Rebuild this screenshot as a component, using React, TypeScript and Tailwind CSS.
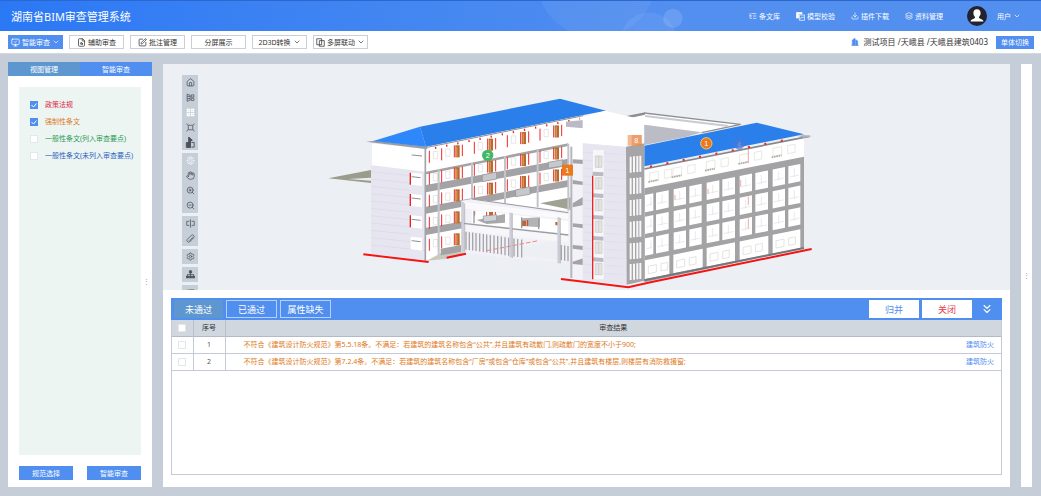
import type { ReactNode } from "react";
import {
  ChevronDown,
  ChevronsDown,
  Download,
  FileSearch,
  Hand,
  House,
  Layers,
  ListTree,
  MonitorCheck,
  Ruler,
  Settings,
  SquarePen,
  ZoomIn,
  ZoomOut,
} from "lucide-react";

interface GlyphProps {
  children: ReactNode;
  size?: number;
}

function Glyph({ children, size = 9 }: GlyphProps) {
  return (
    <svg
      width={size}
      height={size}
      viewBox="0 0 24 24"
      fill="none"
      stroke="currentColor"
      strokeWidth="2"
      className="shrink-0"
    >
      {children}
    </svg>
  );
}

const modelCheckIcon = (
  <Glyph>
    <path d="M1 1h15v4H7v11H1z" fill="currentColor" />
    <path d="M9 8h14v14H9z" />
    <path d="M12 18l3-5 3 3 3-4" />
  </Glyph>
);

const multiScreenIcon = (
  <Glyph>
    <path d="M15 7V2H2v16h6M9 7h13v15H9zM15 7v11H9" />
  </Glyph>
);

const buildingIcon = (
  <Glyph size={8}>
    <path d="M4 22V6l8-5v21zM14 22V5l6 4v13z" fill="currentColor" />
    <path d="M1 22h22" />
  </Glyph>
);

const componentIcon = (
  <Glyph>
    <path d="M3 3l8 3v13l-8 3zM3 9h8M3 15h8M14 5h7v6h-7zM14 14h7v6h-7z" />
  </Glyph>
);

const gridIcon = (
  <Glyph>
    <path d="M2 2h9v9H2zM13 2h9v9h-9zM2 13h9v9H2zM13 13h9v9h-9z" fill="currentColor" stroke="none" />
    <path d="M5 7h4M15 7h4M5 17h4M15 17h4" stroke="#c6ced8" />
  </Glyph>
);

const fitIcon = (
  <Glyph>
    <path d="M6 6h12v12H6zM6 6L1 2M18 6l5-4M6 18l-5 4M18 18l5 4" />
  </Glyph>
);

const walkIcon = (
  <Glyph size={11}>
    <path d="M8 0l8 7-4 2v5l-4-1zM3 12h9v11H3z" fill="currentColor" />
    <path d="M14 12h6v10h-6" />
  </Glyph>
);

const rotateIcon = (
  <Glyph>
    <path d="M8 8l4-2 4 2v7l-4 3-4-3zM3 8a10 10 0 0 1 18 0M3 16a10 10 0 0 0 18 0M1 12h4M19 12h4" />
  </Glyph>
);

const sectionIcon = (
  <Glyph>
    <path d="M9 6H2v11h7M15 6h7v11h-7M12 1v22" />
  </Glyph>
);

const treeIcon = (
  <Glyph>
    <path d="M12 7v9M4 16v-4h16v4" />
    <path d="M9 2h6v6H9zM1 16h6v5H1zM9 16h6v5H9zM17 16h6v5h-6z" fill="currentColor" />
  </Glyph>
);

const navItems = [
  { label: "条文库", icon: <ListTree size={8} /> },
  { label: "模型校验", icon: modelCheckIcon },
  { label: "插件下载", icon: <Download size={8} /> },
  { label: "资料管理", icon: <Layers size={8} /> },
];

const actions: { label: string; icon?: ReactNode; menu?: boolean; active?: boolean }[] = [
  { label: "智能审查", icon: <MonitorCheck size={9} />, menu: true, active: true },
  { label: "辅助审查", icon: <FileSearch size={9} /> },
  { label: "批注管理", icon: <SquarePen size={9} /> },
  { label: "分屏展示" },
  { label: "2D3D转换", menu: true },
  { label: "多屏联动", icon: multiScreenIcon, menu: true },
];

const filters = [
  { id: "policy", label: "政策法规", checked: true, color: "text-[#dc2440]" },
  { id: "mandatory", label: "强制性条文", checked: true, color: "text-[#dd7a1c]" },
  { id: "general-listed", label: "一般性条文(列入审查要点)", checked: false, color: "text-[#2a9a55]" },
  { id: "general-other", label: "一般性条文(未列入审查要点)", checked: false, color: "text-[#2a62bd]" },
];

const toolGroups: { name: string; icon: ReactNode; light?: boolean }[][] = [
  [
    { name: "主页", icon: <House size={9} /> },
    { name: "构件", icon: componentIcon },
    { name: "网格", icon: gridIcon, light: true },
    { name: "适配", icon: fitIcon },
    { name: "漫游", icon: walkIcon },
  ],
  [
    { name: "旋转", icon: rotateIcon, light: true },
    { name: "平移", icon: <Hand size={9} /> },
    { name: "放大", icon: <ZoomIn size={9} /> },
    { name: "缩小", icon: <ZoomOut size={9} /> },
  ],
  [
    { name: "剖切", icon: sectionIcon },
    { name: "测量", icon: <Ruler size={9} className="rotate-90" /> },
  ],
  [{ name: "设置", icon: <Settings size={9} /> }],
  [{ name: "结构树", icon: treeIcon }],
  [{ name: "列表", icon: <ListTree size={9} /> }],
];

const results = [
  {
    text: "不符合《建筑设计防火规范》第5.5.18条。不满足：若建筑的建筑名称包含“公共”,并且建筑有疏散门,则疏散门的宽度不小于900;",
    type: "建筑防火",
  },
  {
    text: "不符合《建筑设计防火规范》第7.2.4条。不满足：若建筑的建筑名称包含“厂房”或包含“仓库”或包含“公共”,并且建筑有楼层,则楼层有消防救援窗;",
    type: "建筑防火",
  },
];

function Header() {
  return (
    <header className="relative flex h-[31px] shrink-0 items-center justify-between overflow-hidden border-t border-[#2a68cf] bg-linear-to-r from-[#2b78f5] to-[#528fef] to-65% pr-[20px] pl-[11px] text-white">
      <svg className="absolute top-0 left-[530px] h-full w-[160px]" viewBox="0 0 160 31" fill="#fff">
        <circle cx="66" cy="-24" r="62" opacity=".06" />
        <circle cx="120" cy="41" r="29" opacity=".07" />
        <circle cx="145" cy="18" r="10" opacity=".13" />
      </svg>
      <h1 className="text-[11px] leading-none">湖南省BIM审查管理系统</h1>
      <nav className="relative flex items-center">
        <div className="flex items-center gap-[16px]">
          {navItems.map((item) => (
            <a key={item.label} href="#" className="flex items-center gap-[2px]">
              {item.icon}
              {item.label}
            </a>
          ))}
        </div>
        <svg viewBox="0 0 20 20" className="ml-[24px] size-[20px]">
          <circle cx="10" cy="10" r="10" fill="#23222e" />
          <path
            d="M10 3.2c2.4 0 3.6 1.6 3.6 3.8 0 1.7-.7 3.2-1.7 4 .1 1.1.6 1.4 2 1.9 1.6.6 2.4 1.2 2.600 2.600H3.500c.2-1.400 1-2 2.600-2.600 1.400-.5 1.900-.8 2-1.900-1-.8-1.700-2.300-1.700-4 0-2.200 1.200-3.800 3.600-3.800z"
            fill="#fff"
          />
        </svg>
        <button className="ml-[10px] flex items-center gap-[2px]">
          用户
          <ChevronDown size={8} />
        </button>
      </nav>
    </header>
  );
}

function ActionBar() {
  return (
    <div className="flex h-[22px] shrink-0 items-center justify-between bg-white pr-[7px] pl-[8px]">
      <div className="flex gap-[6px]">
        {actions.map((a) => (
          <button
            key={a.label}
            className={`flex h-[14px] w-[55px] items-center justify-center gap-[2px] border ${
              a.active
                ? "border-[#508ef0] bg-[#508ef0] text-white"
                : "border-[#c9ced8] bg-white text-[#333]"
            }`}
          >
            {a.icon}
            {a.label}
            {a.menu && <ChevronDown size={8} />}
          </button>
        ))}
      </div>
      <div className="flex items-center">
        <span className="text-[#508ef0]">{buildingIcon}</span>
        <span className="ml-[5px] text-[8px] text-[#333]">测试项目 /天峨县 /天峨县建筑0403</span>
        <button className="ml-[8px] h-[13px] w-[38px] bg-[#508ef0] text-white">单体切换</button>
      </div>
    </div>
  );
}

function CheckBox({ id, label, checked }: { id?: string; label?: string; checked?: boolean }) {
  return (
    <span className="grid size-[8px] shrink-0">
      <input
        id={id}
        type="checkbox"
        aria-label={label}
        defaultChecked={checked}
        className="peer col-start-1 row-start-1 size-[8px] appearance-none border border-[#e3e6ea] bg-white checked:border-[#508ef0] checked:bg-[#508ef0]"
      />
      <svg
        viewBox="0 0 8 8"
        className="pointer-events-none invisible col-start-1 row-start-1 size-[8px] peer-checked:visible"
        fill="none"
        stroke="#fff"
      >
        <path d="M1.500 4l2 2 3-3.500" />
      </svg>
    </span>
  );
}

function Sidebar() {
  return (
    <aside className="mt-[8px] flex w-[144px] shrink-0 flex-col bg-white">
      <div className="flex h-[14px] text-white">
        <button className="flex-1 bg-[#5e97cf]">视图管理</button>
        <button className="flex-1 bg-[#508ef0]">智能审查</button>
      </div>
      <div className="flex flex-1 items-center">
        <div className="ml-[11px] flex flex-1 flex-col self-stretch pt-[11px] pb-[7px]">
          <div className="flex-1 bg-[#edf5f3] pt-[9px] pl-[11px]">
            {filters.map((f) => (
              <div key={f.id} className="flex h-[17px] items-center gap-[7px]">
                <CheckBox id={f.id} checked={f.checked} />
                <label htmlFor={f.id} className={`whitespace-nowrap ${f.color}`}>
                  {f.label}
                </label>
              </div>
            ))}
          </div>
          <div className="mt-[11px] flex justify-between">
            <button className="h-[14px] w-[54px] bg-[#508ef0] text-white">规范选择</button>
            <button className="h-[14px] w-[54px] bg-[#508ef0] text-white">智能审查</button>
          </div>
        </div>
        <span className="w-[11px] text-center text-[#999]">⋮</span>
      </div>
    </aside>
  );
}

const doorColumns = [413, 513, 612, 711];
const redColumns = [328, 365, 463, 562, 660];
const floors = [0, 1, 2, 3, 4];
const fencePosts = [438, 448, 458, 468, 479, 490, 500, 511, 522, 533, 544, 555, 566, 582, 593, 605, 724, 734, 744];
const windowPairs = [
  [285, 25],
  [318, 38],
  [371, 37],
  [418, 37],
  [470, 38],
  [517, 38],
  [569, 37],
  [616, 38],
  [668, 37],
  [715, 36],
];
const groundWindows = [
  [285, 73],
  [370, 88],
  [470, 85],
  [569, 86],
  [668, 83],
];

// parallelogram that follows the slope of the facade
function slanted(x: number, y: number, w: number, h: number) {
  const drop = w * 0.2;
  return `${x},${y} ${x + w},${y - drop} ${x + w},${y - drop + h} ${x},${y + h}`;
}

function LeftWing() {
  return (
    <g>
      <path d="M25 295 153 270V293L85 297 153 302V309Z" fill="#9a9c8c" />
      <path d="M318 200 790 105V395L424 520 318 545Z" fill="#fff" />
      <path d="M318 543 362 520 424 516 440 523 380 536Z" fill="#c9c9bd" />
      <path d="M660 370 790 345V395L745 388Z" fill="#9fa292" />
      <g fill="#a3a3a5">
        <path d="M318 275 745 190V198L318 283Z" />
        <path d="M318 315 745 236V257L318 337Z" />
        <path d="M318 380 745 300V320L318 401Z" />
        <path d="M318 443 640 388V406L318 465Z" />
        <path d="M362 506 424 495V515L362 526Z" />
      </g>
      {doorColumns.map((x) =>
        floors
          .filter((f) => f < 3 || x === 413)
          .map((f) => {
            const y = 196 + f * 66 - (x - 413) * 0.2;
            return (
              <g key={`${x}-${f}`}>
                <rect x={x - 7} y={y} width="13" height="36" fill="#b96a2a" />
                <rect x={x - 4} y={y + 4} width="3" height="30" fill="#e3a66f" />
                <path d={`M${x - 10} ${y}v36M${x + 14} ${y - 2}v34`} stroke="#f02828" strokeWidth="3" />
              </g>
            );
          }),
      )}
      {redColumns.map((x) =>
        floors
          .filter((f) => f < 3 || x < 400)
          .map((f) => {
            const y = 205 + f * 66 - (x - 365) * 0.2;
            return (
              <g key={`${x}-${f}`}>
                <path d={`M${x} ${y}v36`} stroke="#f02828" strokeWidth="3" />
                <path d={`M${x + 12} ${y + 2}h13v22h-13z`} fill="none" stroke="#d9d9dd" strokeWidth="2" />
              </g>
            );
          }),
      )}
      <path d="M356 268V525M456 248V365M555 228V375M653 208V385M745 192V400" stroke="#c3c3cb" strokeWidth="6" />
      <g fill="#c7c8cc" stroke="#8f9094" strokeWidth="2">
        <path d="M487 285 530 276V297L487 305Z" />
        <path d="M587 330 630 320V343L587 350Z" />
        <path d="M685 247 728 239V258L685 265Z" />
      </g>
      <path d="M153 188 318 205V545L153 520Z" fill="#e7e6f0" />
      <path d="M155 190 318 207V275L155 256Z" fill="#fff" />
      <path
        d="M153 275 270 287M153 297 270 309M153 319 270 331M153 341 270 353M153 363 270 375M153 385 270 397M153 407 270 419M153 429 270 441M153 451 270 463M153 473 270 485M153 495 318 512"
        stroke="#d8d7e4"
        strokeWidth="2"
      />
      <path d="M272 278 306 281V318L272 314ZM272 342 306 345V382L272 378ZM272 406 306 409V446L272 442ZM272 470 306 473V512L272 508Z" fill="#fff" />
      <path d="M275 225 306 228M275 290 302 293M275 354 302 357M275 418 302 421M275 482 302 485" stroke="#8e8e98" strokeWidth="3" />
      <path d="M271 278V314M271 342V378M271 406V442" stroke="#f02020" strokeWidth="4" />
      <path d="M316 205V545" stroke="#a3a3ab" strokeWidth="5" />
      <path d="M138 185 165 182 322 200V208L175 190Z" fill="#9b9da3" />
      <path d="M160 183 300 140 318 200Z" fill="#2f88fb" />
      <path d="M300 140 720 56 858 92 790 105 318 200Z" fill="#2a7fea" />
      <path d="M322 202 790 107" stroke="#8d8d93" strokeWidth="3" />
      <path d="M345 204 780 116" stroke="#f02020" strokeWidth="6" strokeDasharray="4 30" />
    </g>
  );
}

function Bridge() {
  return (
    <g>
      <path d="M424 362 455 357 790 398V552L600 538 428 518Z" fill="#f1f1f7" />
      <path d="M610 500 720 480V540L610 528Z" fill="#eceff4" />
      <path d="M455 390 745 423V462L455 430Z" fill="#fff" />
      <path d="M470 420 555 402V428L500 432Z" fill="#a9a9ab" />
      <path d="M605 415 660 412V442L605 438Z" fill="#b4b4b6" />
      <path d="M507 396h12v14h-12zM606 422h12v16h-12zM706 426h8v10h-8z" fill="#b96a2a" />
      <path d="M500 396v20M526 396v14M623 420v18M464 394v12" stroke="#f02828" strokeWidth="3" />
      <path d="M490 408 530 404V422L490 426Z" fill="#d0d1d5" stroke="#8f9094" strokeWidth="2" />
      <path d="M455 357 745 398" stroke="#9a9a9e" strokeWidth="3" />
      <path d="M428 366 745 403V418L428 385Z" fill="#fafafc" />
      <path d="M430 430 745 465" stroke="#9c9ca2" strokeWidth="4" />
      <path d="M430 434 745 469V487L430 452Z" fill="#f7f7fa" />
      {fencePosts.map((x) => (
        <path key={x} d={`M${x} ${455 + (x - 438) * 0.14}v${x < 700 ? 54 : 46}`} stroke="#a5a6aa" strokeWidth="4" />
      ))}
      <path d="M428 366V518M572 398V532M716 412V550" stroke="#cfcfda" strokeWidth="8" />
      <path d="M434 370V518M577 400V534M721 414V550" stroke="#9fa0a6" strokeWidth="2" />
      <path d="M462 392V430M605 412V445M656 416V448" stroke="#9a9aa0" strokeWidth="4" />
      <path d="M500 512 655 482" stroke="#e88" strokeWidth="3" strokeDasharray="14 6" />
    </g>
  );
}

function Tower() {
  return (
    <g>
      <path d="M752 240 790 235V600L752 598Z" fill="#f3f3f7" />
      <path d="M758 238 790 240V252L758 250ZM758 300 790 305V315L758 312ZM758 370 790 350V375L758 382ZM758 430 790 433V445L758 440ZM758 495 790 498V510L758 506ZM758 545 790 535V555L758 552Z" fill="#a4a4a8" />
      <path d="M754 200V594" stroke="#b6b6be" strokeWidth="6" />
      <path d="M738 125 790 120V145L738 140Z" fill="#b9bac4" />
      <path d="M885 115 975 97 1265 132 1145 157 975 135 910 118Z" fill="#fff" />
      <path d="M885 115 975 97V104L912 118Z" fill="#8e8e90" />
      <path d="M973 99 1262 133 1145 158" fill="none" stroke="#909094" strokeWidth="4" />
      <path d="M975 108 1225 138" stroke="#c9cad2" strokeWidth="6" />
      <path d="M973 134 1145 157 1100 170 973 195Z" fill="#bbbcc6" />
      <path d="M788 110 855 92 972 120V195L918 202 788 190Z" fill="#fff" />
      <path d="M788 190 918 200V614L788 600Z" fill="#e7e6f0" />
      <path
        d="M788 216 918 224M788 240 918 248M788 264 918 272M788 288 918 296M788 312 918 320M788 336 918 344M788 360 918 368M788 384 918 392M788 408 918 416M788 432 918 440M788 456 918 464M788 480 918 488M788 504 918 512M788 528 918 536M788 552 918 560M788 576 918 584"
        stroke="#dcdbe8"
        strokeWidth="2"
      />
      {[210, 275, 340, 405, 468, 532].map((y) => (
        <g key={y}>
          <rect x="819" y={y} width="32" height="66" fill="#f7f7f9" />
          <path d={`M826 ${y + 18}h20v34h-20zM836 ${y + 18}v34`} fill="#e4e5e3" stroke="#c5c7c5" strokeWidth="2" />
          {y > 210 && <path d={`M818 ${y}l32 2v12l-32-2z`} fill="#b9bac4" />}
        </g>
      ))}
      <path d="M818 287V598" stroke="#f02020" strokeWidth="4" />
      <path d="M918 200 973 190V602L920 614Z" fill="#a5a5a7" />
      {[230, 295, 360, 425, 490, 552].map((y) => (
        <path
          key={y}
          d={`M932 ${y}v48M942 ${y - 1}v48M952 ${y - 2}v48M961 ${y - 3}v48`}
          stroke="#f7f7fa"
          strokeWidth="6"
        />
      ))}
    </g>
  );
}

function RightWing() {
  return (
    <g transform="translate(690 0)">
      <path d="M283 265 762 172V240L283 330Z" fill="#fff" />
      <path d="M283 325 762 230V505L283 607Z" fill="#a3a3a5" />
      {windowPairs.map(([x, w]) =>
        [0, 1, 2].map((row) => {
          const y = 345 + row * 65 - (x - 285) * 0.2;
          return (
            <g key={`${x}-${row}`}>
              <polygon points={slanted(x, y, w, 52)} fill="#fff" />
              <path d={`M${x + 4} ${y + 32}l${w - 8} -6M${x + 18} ${y + 6}v26`} stroke="#dedee2" strokeWidth="2" />
            </g>
          );
        }),
      )}
      {groundWindows.map(([x, w]) => {
        const y = 541 - (x - 285) * 0.2;
        return (
          <g key={x}>
            <polygon points={slanted(x, y, w, 56)} fill="#fff" />
            <path d={`M${x + 10} ${y + 18}l24 -5v22l-24 5zM${x + 48} ${y + 10}l20 -4v22l-20 4z`} fill="none" stroke="#d7d8d2" strokeWidth="2" />
          </g>
        );
      })}
      {[295, 365, 465, 565, 665].map((x) => {
        const y = 295 - (x - 285) * 0.2;
        return (
          <g key={x}>
            <path d={`M${x + 4} ${y - 14}l26 -5v24l-26 5zM${x + 48} ${y - 22}l22 -4v24l-22 4z`} fill="none" stroke="#dcdcd8" strokeWidth="2" />
            <path d={`M${x} ${y + 13}l30 -6`} stroke="#a9aba0" strokeWidth="5" strokeDasharray="5 2" />
          </g>
        );
      })}
      <path d="M595 198V250M595 350V375M595 415V446M572 300V320M375 345V360M474 326V342" stroke="#f5a9a9" strokeWidth="3" />
      <path d="M283 197 620 128 762 163 283 259Z" fill="#2a7fea" />
      <path d="M283 267 778 169" stroke="#88888c" strokeWidth="5" />
      <path d="M300 260 700 181" stroke="#f02020" strokeWidth="6" strokeDasharray="6 44" />
      <path d="M745 168 762 165 786 168 762 174Z" fill="#b0b1b5" />
      <path d="M283 601 762 504" stroke="#77777b" strokeWidth="6" />
    </g>
  );
}

function Building() {
  return (
    <svg viewBox="-471 -48 2541 678" className="block h-full w-full" fontFamily="Liberation Sans, sans-serif">
      <LeftWing />
      <Bridge />
      <RightWing />
      <Tower />
      <g fill="none" stroke="#f41414" strokeWidth="6">
        <path d="M130 523 326 546M380 533 438 521M723 597 925 622 995 606 1475 507" />
      </g>
      <g fill="#fff" fontSize="22" textAnchor="middle">
        <circle cx="503" cy="226" r="17" fill="#3fb868" />
        <text x="503" y="234">2</text>
        <rect x="726" y="254" width="33" height="33" fill="#e9791c" />
        <text x="742" y="278">1</text>
        <g opacity=".8">
          <rect x="923" y="165" width="42" height="32" fill="#f2a878" />
          <rect x="935" y="165" width="30" height="32" fill="#e98745" />
          <text x="949" y="189">8</text>
        </g>
        <circle cx="1159" cy="190" r="17" fill="#e9791c" stroke="#f6c96a" strokeWidth="3" />
        <text x="1159" y="198">1</text>
        <circle cx="1257" cy="193" r="16" fill="#4a78d8" opacity=".7" />
        <text x="1257" y="201" fill="#7f9be0">4</text>
      </g>
    </svg>
  );
}

function Viewer() {
  return (
    <section className="relative h-[226px] shrink-0 overflow-hidden bg-[#eceff4]">
      <Building />
      <div className="absolute top-[11px] left-[19px] flex w-[16px] flex-col gap-[3px]">
        {toolGroups.map((group) => (
          <div key={group[0].name} className="flex flex-col bg-[#c6ced8]">
            {group.map((tool) => (
              <button
                key={tool.name}
                aria-label={tool.name}
                className={`flex h-[15px] items-center justify-center ${tool.light ? "text-white" : "text-[#4b525c]"}`}
              >
                {tool.icon}
              </button>
            ))}
          </div>
        ))}
      </div>
    </section>
  );
}

function ResultPanel() {
  return (
    <section className="mx-[8px] mt-[8px] mb-[12px] flex flex-1 flex-col border border-[#c5cbd6]">
      <div className="-mx-px -mt-px flex h-[22px] items-center gap-[3px] bg-[#508ef0] pr-[8px] pl-[3px] text-[9px] text-white">
        <button className="h-[18px] w-[49px] bg-[#5e97cf]">未通过</button>
        <button className="h-[18px] w-[51px] border border-[#b5d0fa]">已通过</button>
        <button className="h-[18px] w-[51px] border border-[#b5d0fa]">属性缺失</button>
        <button className="ml-auto h-[18px] w-[50px] bg-white text-[#508ef0]">归并</button>
        <button className="h-[18px] w-[50px] bg-white text-[#e23c48]">关闭</button>
        <button aria-label="收起" className="ml-[5px]">
          <ChevronsDown size={14} strokeWidth={2} />
        </button>
      </div>
      <table className="w-full table-fixed border-collapse">
        <colgroup>
          <col className="w-[21px]" />
          <col className="w-[32px]" />
          <col />
          <col className="w-[60px]" />
        </colgroup>
        <thead>
          <tr className="h-[16px] border-b border-[#b3bac6] bg-[#d0d7df] text-[#333]">
            <th className="border-r border-[#b9c0cb] p-0 pl-[6px]">
              <CheckBox label="全选" />
            </th>
            <th className="border-r border-[#b9c0cb] p-0 font-normal">序号</th>
            <th colSpan={2} className="p-0 font-normal">
              审查结果
            </th>
          </tr>
        </thead>
        <tbody>
          {results.map((row, idx) => (
            <tr key={idx} className="h-[17px] border-b border-[#c5cbd6]">
              <td className="border-r border-[#c5cbd6] p-0 pl-[6px]">
                <CheckBox label={`选择第${idx + 1}行`} />
              </td>
              <td className="border-r border-[#c5cbd6] p-0 text-center text-[#555]">{idx + 1}</td>
              <td className="p-0 pl-[18px] whitespace-nowrap text-[#dd7a1c]">{row.text}</td>
              <td className="p-0 pr-[7px] text-right">
                <a href="#" className="text-[#508ef0]">
                  {row.type}
                </a>
              </td>
            </tr>
          ))}
        </tbody>
      </table>
    </section>
  );
}

export default function App() {
  return (
    <div className="flex min-h-screen flex-col bg-[#c5cdd9] font-['Noto_Sans','Noto_Sans_CJK_SC',sans-serif] text-[7px] leading-none">
      <Header />
      <ActionBar />
      <main className="flex flex-1 border-t border-[#d3d9e1] pr-[9px] pb-[9px] pl-[8px]">
        <Sidebar />
        <div className="mt-[10px] ml-[11px] flex min-w-0 flex-1 flex-col bg-white">
          <Viewer />
          <ResultPanel />
        </div>
        <div className="mt-[10px] ml-[11px] flex w-[11px] shrink-0 items-center justify-center bg-white text-[#999]">
          ⋮
        </div>
      </main>
    </div>
  );
}
